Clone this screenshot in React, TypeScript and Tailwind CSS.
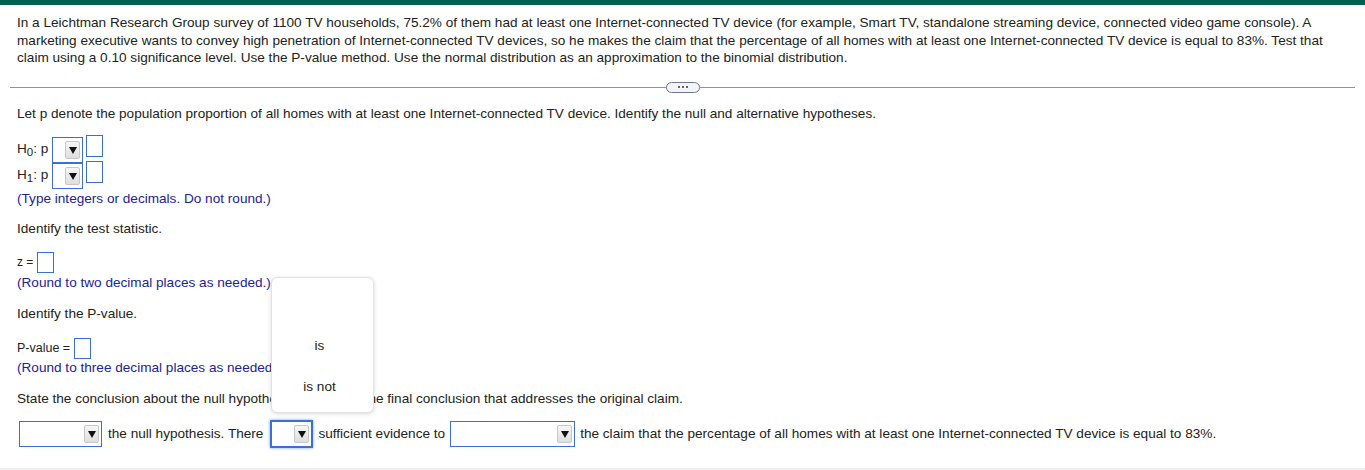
import React from "react";

const font = { fontFamily: '"Liberation Sans", Arial, sans-serif' };

function Arrow() {
  return (
    <span className="flex h-[18px] w-[15px] items-center justify-center rounded-[2px] border border-[#c8c8c8] bg-gradient-to-b from-[#f6f6f6] to-[#dedede]">
      <svg width="8" height="8" viewBox="0 0 8 8">
        <path d="M0 1 L8 1 L4 8 Z" fill="#111" />
      </svg>
    </span>
  );
}

function Dropdown({ w, focused }: { w: string; focused?: boolean }) {
  return (
    <span
      className={
        "inline-flex shrink-0 items-center justify-end pr-[2px] bg-white " +
        w +
        (focused
          ? " h-[28px] border-2 border-[#3b6fd4] shadow-[0_0_3px_#7aa0e8]"
          : " h-[26px] border border-[#3b6fd4]")
      }
    >
      <Arrow />
    </span>
  );
}

function Box({ h = "h-[21px]" }: { h?: string }) {
  return <span className={"inline-block w-[17px] border border-[#3b6fd4] bg-white " + h} />;
}

export default function App() {
  return (
    <div className="relative h-[470px] w-[1365px] overflow-hidden bg-white text-[13.6px] text-[#222]" style={font}>
      <div className="h-[5px] bg-[#00614f]" />
      <p className="mt-[9px] px-[17px] leading-[17.5px]">
        In a Leichtman Research Group survey of 1100 TV households, 75.2% of them had at least one Internet-connected TV device (for
        example, Smart TV, standalone streaming device, connected video game console). A marketing executive wants to convey high
        penetration of Internet-connected TV devices, so he makes the claim that the percentage of all homes with at least one
        Internet-connected TV device is equal to 83%. Test that claim using a 0.10 significance level. Use the P-value method. Use the
        normal distribution as an approximation to the binomial distribution.
      </p>
      <div className="mx-[10px] mt-[15px] flex h-[11px] items-center">
        <div className="h-px flex-1 bg-[#8a93a3]" />
        <div className="flex h-[11px] w-[34px] items-center justify-center gap-[2px] rounded-full border border-[#6d7787] bg-[#f2f4f7]">
          <span className="h-[2px] w-[2px] bg-[#5a6475]" />
          <span className="h-[2px] w-[2px] bg-[#5a6475]" />
          <span className="h-[2px] w-[2px] bg-[#5a6475]" />
        </div>
        <div className="h-px flex-1 bg-[#8a93a3]" />
      </div>
      <div className="px-[17px]">
        <p className="mt-[12px] leading-[17.5px]">
          Let p denote the population proportion of all homes with at least one Internet-connected TV device. Identify the null and
          alternative hypotheses.
        </p>
        <div className="mt-[15px] flex h-[25px] items-center">
          <span className="w-[35px]">
            H<sub className="text-[11.5px]">0</sub>: p
          </span>
          <Dropdown w="w-[31px]" />
          <span className="ml-[3px]">
            <Box h="h-[22px]" />
          </span>
        </div>
        <div className="flex h-[27px] items-center">
          <span className="w-[35px]">
            H<sub className="text-[11.5px]">1</sub>: p
          </span>
          <Dropdown w="w-[31px]" />
          <span className="ml-[3px]">
            <Box h="h-[22px]" />
          </span>
        </div>
        <p className="mt-[1px] leading-[17.5px] text-[#222299]">(Type integers or decimals. Do not round.)</p>
        <p className="mt-[12px] leading-[17.5px]">Identify the test statistic.</p>
        <div className="mt-[15px] flex h-[20px] items-center">
          <span className="mr-[4px] text-[12px]">z =</span>
          <Box />
        </div>
        <p className="mt-[2px] leading-[17.5px] text-[#222299]">(Round to two decimal places as needed.)</p>
        <p className="mt-[13px] leading-[17.5px]">Identify the P-value.</p>
        <div className="mt-[16px] flex h-[20px] items-center">
          <span className="mr-[4px] text-[12.5px]">P-value =</span>
          <Box />
        </div>
        <p className="mt-[1px] leading-[17.5px] text-[#222299]">(Round to three decimal places as needed.)</p>
        <p className="mt-[13px] leading-[17.5px]">
          State the conclusion about the null hypothesis, then state the final conclusion that addresses the original claim.
        </p>
        <div className="ml-[2px] mt-[13px] flex h-[28px] items-center">
          <Dropdown w="w-[83px]" />
          <span className="ml-[6px] mr-[7px] whitespace-nowrap">the null hypothesis. There</span>
          <Dropdown w="w-[43px]" focused />
          <span className="ml-[5px] mr-[5px] whitespace-nowrap">sufficient evidence to</span>
          <Dropdown w="w-[125px]" />
          <span className="ml-[5px] whitespace-nowrap">the claim that the percentage of all homes with at least one Internet-connected TV device is equal to 83%.</span>
        </div>
      </div>
      <div className="absolute bottom-0 left-0 right-0 h-[2px] bg-[#eeeeee]" />
      <div className="absolute left-[271px] top-[277px] flex h-[136px] w-[103px] flex-col items-center rounded-[6px] border border-[#e2e2e2] bg-white pr-[6px] shadow-[0_1px_4px_rgba(0,0,0,0.15)]">
        <span className="mt-[60px] leading-[15px]">is</span>
        <span className="mt-[26px] leading-[15px]">is not</span>
      </div>
    </div>
  );
}
